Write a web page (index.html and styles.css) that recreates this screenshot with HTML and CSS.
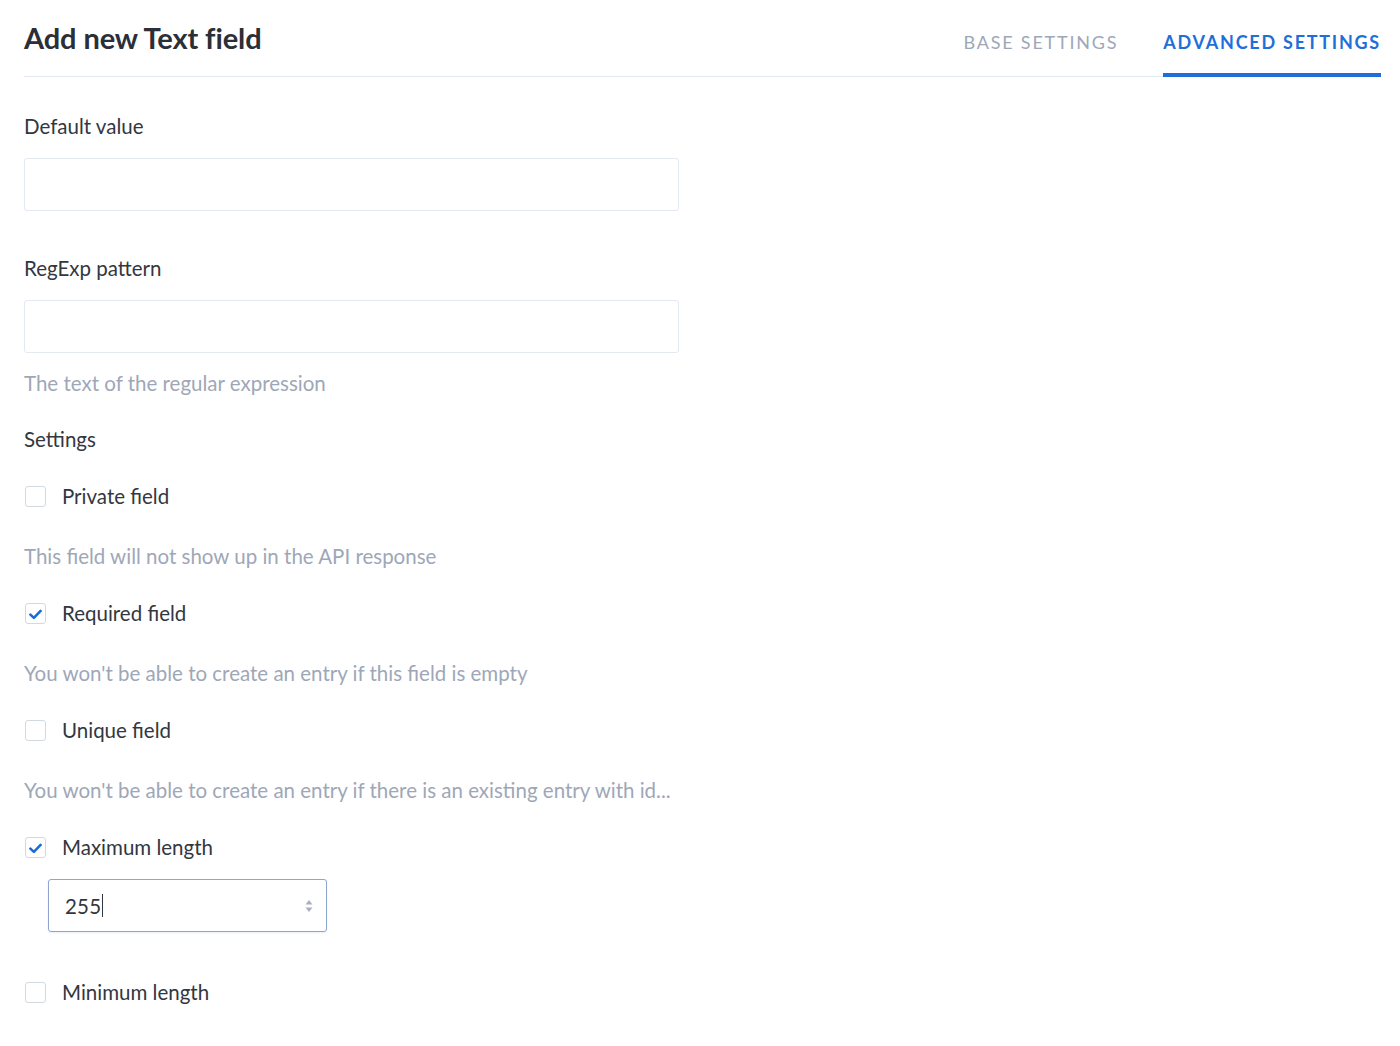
FILE: index.html
```html
<!DOCTYPE html>
<html lang="en">
<head>
<meta charset="utf-8">
<title>Add new Text field</title>
<link rel="stylesheet" href="styles.css">
</head>
<body>
<div class="page">
  <header class="header">
    <h1 class="title">Add new Text field</h1>
    <nav class="tabs">
      <span class="tab">BASE SETTINGS</span>
      <span class="tab tab-active">ADVANCED SETTINGS</span>
    </nav>
  </header>

  <section class="form">
    <div class="group">
      <label class="label">Default value</label>
      <div class="input"></div>
    </div>

    <div class="group group-regexp">
      <label class="label">RegExp pattern</label>
      <div class="input"></div>
      <p class="help help-regexp">The text of the regular expression</p>
    </div>

    <h2 class="label settings-title">Settings</h2>

    <div class="check-row">
      <span class="box"></span>
      <span class="check-label">Private field</span>
    </div>
    <p class="help help-check">This field will not show up in the API response</p>

    <div class="check-row">
      <span class="box box-checked">
        <svg viewBox="0 0 12 10" width="13" height="11"><path d="M1.3 5.1 L4.5 8.1 L10.7 1.7" fill="none" stroke="#1c6bd9" stroke-width="2.4" stroke-linecap="round" stroke-linejoin="round"/></svg>
      </span>
      <span class="check-label">Required field</span>
    </div>
    <p class="help help-check">You won't be able to create an entry if this field is empty</p>

    <div class="check-row">
      <span class="box"></span>
      <span class="check-label">Unique field</span>
    </div>
    <p class="help help-check">You won't be able to create an entry if there is an existing entry with id...</p>

    <div class="check-row">
      <span class="box box-checked">
        <svg viewBox="0 0 12 10" width="13" height="11"><path d="M1.3 5.1 L4.5 8.1 L10.7 1.7" fill="none" stroke="#1c6bd9" stroke-width="2.4" stroke-linecap="round" stroke-linejoin="round"/></svg>
      </span>
      <span class="check-label">Maximum length</span>
    </div>
    <div class="number-input">
      <span class="number-value">255</span><span class="caret"></span>
      <span class="spinner">
        <svg viewBox="0 0 8 14" width="8" height="14"><path d="M4 1 L7.5 5.5 L0.5 5.5 Z" fill="#a9b0bd"/><path d="M4 13 L7.5 8.5 L0.5 8.5 Z" fill="#a9b0bd"/></svg>
      </span>
    </div>

    <div class="check-row check-row-last">
      <span class="box"></span>
      <span class="check-label">Minimum length</span>
    </div>
  </section>
</div>
</body>
</html>
```

FILE: styles.css
```css
* {
  box-sizing: border-box;
}

html, body {
  margin: 0;
  padding: 0;
  background: #ffffff;
}

body {
  font-family: Lato, "Open Sans", sans-serif;
  color: #333740;
}

.page {
  padding: 0 19px 0 24px;
}

.header {
  display: flex;
  justify-content: space-between;
  align-items: flex-end;
  height: 77px;
  border-bottom: 1px solid #e3e9f3;
}

.title {
  margin: 0;
  align-self: flex-start;
  padding-top: 20px;
  font-size: 29px;
  line-height: 36px;
  font-weight: 700;
  letter-spacing: -0.1px;
  color: #2b2f37;
}

.tabs {
  display: flex;
  gap: 45px;
  margin-bottom: -1px;
}

.tab {
  display: block;
  padding-bottom: 20px;
  font-size: 18px;
  line-height: 22px;
  letter-spacing: 1.8px;
  color: #9ea7b8;
  border-bottom: 4px solid transparent;
}

.tab-active {
  color: #1f6fd8;
  font-weight: 700;
  border-bottom-color: #1f6fd8;
  letter-spacing: 1.75px;
}

.form {
  padding-top: 37px;
}

.label {
  display: block;
  margin: 0;
  font-size: 20.5px;
  line-height: 24px;
  font-weight: 400;
  color: #333740;
}

.input {
  margin-top: 20px;
  width: 655px;
  height: 53px;
  border: 1px solid #e3e9f3;
  border-radius: 3px;
  background: #fff;
}

.group-regexp {
  margin-top: 45px;
}

.help {
  margin: 0;
  font-size: 20.5px;
  line-height: 24px;
  color: #9ea7b8;
}

.help-regexp {
  margin-top: 18px;
}

.settings-title {
  margin-top: 32px;
}

.check-row {
  display: flex;
  align-items: center;
  gap: 16px;
  height: 24px;
  margin-top: 33px;
  padding-left: 1px;
}

.check-row .box {
  margin-top: 1px;
}

.check-row-last {
  margin-top: 48px;
}

.box {
  flex: none;
  display: flex;
  align-items: center;
  justify-content: center;
  width: 21px;
  height: 21px;
  border: 1px solid #d3d9e3;
  border-radius: 3px;
  background: #fff;
}

.box svg {
  display: block;
  margin-top: 1px;
}

.check-label {
  font-size: 20.5px;
  line-height: 24px;
  color: #333740;
}

.help-check {
  margin-top: 36px;
}

.number-input {
  display: flex;
  align-items: center;
  margin: 20px 0 0 24px;
  width: 279px;
  height: 53px;
  padding: 0 13px 0 16px;
  border: 1px solid #8ea5cf;
  border-radius: 3px;
  box-shadow: 0 1px 2px rgba(120, 150, 210, 0.15);
}

.number-value {
  font-size: 20.5px;
  line-height: 24px;
  color: #333740;
  letter-spacing: 0.2px;
}

.caret {
  display: block;
  width: 1px;
  height: 23px;
  margin-left: 1px;
  background: #333740;
}

.spinner {
  margin-left: auto;
  display: flex;
  align-items: center;
}

.spinner svg {
  display: block;
}
```
